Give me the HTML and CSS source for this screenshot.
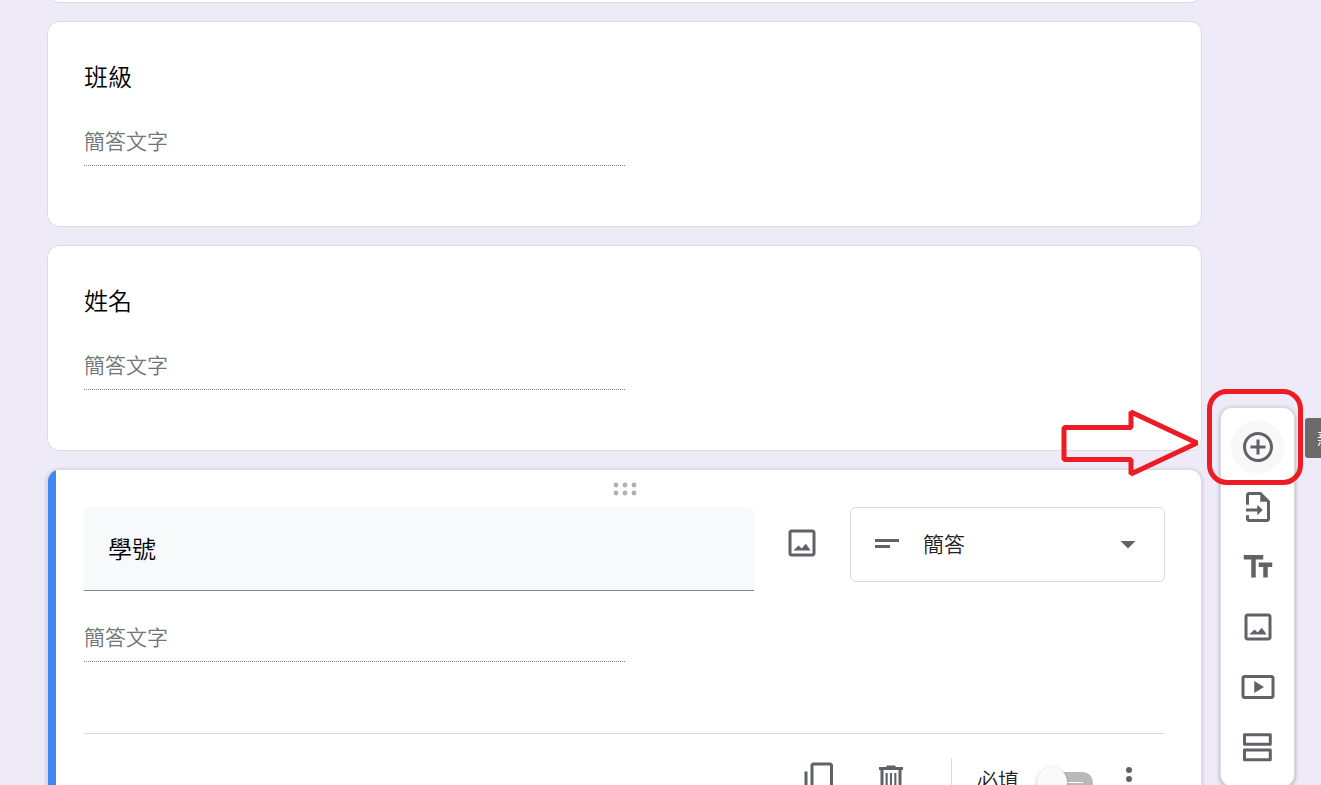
FILE: index.html
```html
<!DOCTYPE html>
<html lang="zh-Hant">
<head>
    <meta charset="UTF-8">
    <meta name="viewport" content="width=device-width, initial-scale=1.0">
    <title>表單編輯器</title>
    <link rel="stylesheet" href="styles.css">
</head>
<body>
    <div class="editor">
        <main class="questions">
            <section class="card"></section>

            <section class="card">
                <label class="question-title" for="answer-class">班級</label>
                <input class="short-answer" type="text" id="answer-class" placeholder="簡答文字" disabled>
            </section>

            <section class="card">
                <label class="question-title" for="answer-name">姓名</label>
                <input class="short-answer" type="text" id="answer-name" placeholder="簡答文字" disabled>
            </section>

            <section class="card card-active">
                <div class="drag-handle">
                    <svg width="24" height="14" viewBox="0 0 24 14">
                        <circle cx="3" cy="3" r="2.4"/><circle cx="12" cy="3" r="2.4"/><circle cx="21" cy="3" r="2.4"/>
                        <circle cx="3" cy="11" r="2.4"/><circle cx="12" cy="11" r="2.4"/><circle cx="21" cy="11" r="2.4"/>
                    </svg>
                </div>
                <div class="question-row">
                    <input class="title-input" type="text" value="學號" aria-label="問題">
                    <button class="icon-button add-image" type="button" aria-label="新增圖片">
                        <svg class="icon" viewBox="0 0 24 24"><path d="M19 5v14H5V5h14m0-2H5c-1.100 0-2 .9-2 2v14c0 1.100.9 2 2 2h14c1.100 0 2-.9 2-2V5c0-1.100-.9-2-2-2z"/><path d="M14.500 12.500l-2.700 3.200-2.100-2L6.200 17h11.600z"/></svg>
                    </button>
                    <div class="type-picker">
                        <svg class="icon type-icon" viewBox="0 0 24 24"><path d="M4 8.600h16v2H4zM4 12.600h10v2H4z"/></svg>
                        <select aria-label="問題類型">
                            <option>簡答</option>
                            <option>段落</option>
                            <option>選擇題</option>
                        </select>
                        <svg class="icon arrow-icon" viewBox="0 0 24 24"><path d="M7 10l5 5 5-5z"/></svg>
                    </div>
                </div>
                <input class="short-answer" type="text" placeholder="簡答文字" aria-label="簡答文字" disabled>

                <div class="card-footer">
                    <button class="icon-button" type="button" aria-label="複製">
                        <svg class="icon" viewBox="0 0 24 24"><path d="M20 1H9c-1.100 0-2 .9-2 2v13c0 1.100.9 2 2 2h11c1.100 0 2-.9 2-2V3c0-1.100-.9-2-2-2zm0 15H9V3h11v13zM3 7h2v14h11v2H5c-1.100 0-2-.9-2-2z"/></svg>
                    </button>
                    <button class="icon-button" type="button" aria-label="刪除">
                        <svg class="icon" viewBox="0 0 24 24"><path d="M15 4V3H9v1H4v2h1v13c0 1.100.9 2 2 2h10c1.100 0 2-.9 2-2V6h1V4h-5zm2 15H7V6h10v13z"/><path d="M8.400 8h1.400v9.500H8.400zM11.300 8h1.400v9.500h-1.400zM14.200 8h1.400v9.500h-1.400z"/></svg>
                    </button>
                    <span class="divider"></span>
                    <label class="required">
                        必填
                        <input type="checkbox">
                    </label>
                    <button class="icon-button" type="button" aria-label="更多選項">
                        <svg class="icon" viewBox="0 0 24 24"><circle cx="12" cy="6" r="2"/><circle cx="12" cy="12" r="2"/><circle cx="12" cy="18" r="2"/></svg>
                    </button>
                </div>
            </section>
        </main>

        <aside class="toolbar">
            <button class="tool tool-hover" type="button" aria-label="新增問題">
                <svg class="icon" viewBox="0 0 24 24"><path d="M13 7h-2v4H7v2h4v4h2v-4h4v-2h-4V7z"/><path d="M12 2C6.480 2 2 6.480 2 12s4.480 10 10 10 10-4.480 10-10S17.520 2 12 2zm0 18c-4.410 0-8-3.590-8-8s3.590-8 8-8 8 3.590 8 8-3.590 8-8 8z"/></svg>
            </button>
            <button class="tool" type="button" aria-label="匯入問題">
                <svg class="icon" viewBox="0 0 24 24"><path d="M14 2H6c-1.100 0-2 .9-2 2v6.500h2V4h7.500v4.500H18V20H6v-2.500H4V20c0 1.100.9 2 2 2h12c1.100 0 2-.9 2-2V8z"/><path d="M11.500 10.500V13H4v2h7.500v2.500L15.200 14z"/></svg>
            </button>
            <button class="tool" type="button" aria-label="新增標題與說明">
                <svg class="icon" viewBox="0 0 24 24"><path d="M2.500 4v3h5v12h3V7h5V4h-13zm19 5h-9v3h3v7h3v-7h3V9z"/></svg>
            </button>
            <button class="tool" type="button" aria-label="新增圖片">
                <svg class="icon" viewBox="0 0 24 24"><path d="M19 5v14H5V5h14m0-2H5c-1.100 0-2 .9-2 2v14c0 1.100.9 2 2 2h14c1.100 0 2-.9 2-2V5c0-1.100-.9-2-2-2z"/><path d="M14.500 12.500l-2.700 3.200-2.100-2L6.200 17h11.600z"/></svg>
            </button>
            <button class="tool" type="button" aria-label="新增影片">
                <svg class="icon" viewBox="0 0 24 24"><path d="M21 4H3c-1.100 0-2 .9-2 2v12c0 1.100.9 2 2 2h18c1.100 0 2-.9 2-2V6c0-1.100-.9-2-2-2zm0 14H3V6h18v12z"/><path d="M9.500 8v8l6.500-4z"/></svg>
            </button>
            <button class="tool" type="button" aria-label="新增區段">
                <svg class="icon" viewBox="0 0 24 24"><path d="M20.200 13H3c-.6 0-1 .4-1 1v6.500c0 .6.4 1 1 1h17.200c.6 0 1-.4 1-1V14c0-.6-.4-1-1-1zm-1 6.500H4V15h15.200zM20.200 2.800H3c-.6 0-1 .4-1 1v6.400c0 .6.4 1 1 1h17.200c.6 0 1-.4 1-1V3.800c0-.6-.4-1-1-1zm-1 6.400H4V4.800h15.200z"/></svg>
            </button>

            <span class="tooltip">新增問題</span>
            <span class="highlight-box"></span>
            <svg class="highlight-arrow" width="140" height="72" viewBox="0 0 140 72"><path d="M3 20.500H70V5L136 36L70 67V52.500H3z"/></svg>
        </aside>
    </div>
</body>
</html>
```

FILE: styles.css
```css
* {
    box-sizing: border-box;
}

body {
    font-family: "Noto Sans CJK TC", sans-serif;
    font-weight: 350;
    background: #eeeaf8;
    color: #000;
    margin: 0;
    height: 100vh;
    overflow: hidden;
}

input,
select,
button {
    font-family: inherit;
    font-weight: inherit;
    margin: 0;
}

.editor {
    display: flex;
    align-items: flex-start;
    gap: 18px;
    padding: 0 26px 0 47px;
}

/* scrolled past the top of the form */
.questions {
    flex: 1;
    display: flex;
    flex-direction: column;
    gap: 18px;
    margin-top: -203px;
}

.card {
    position: relative;
    min-height: 206px;
    padding: 38px 36px 60px;
    background: #fff;
    border: 1px solid #dadce0;
    border-radius: 12px;
}

.question-title {
    display: block;
    margin-bottom: 26px;
    font-size: 24px;
    line-height: 32px;
}

.short-answer {
    display: block;
    width: 50%;
    height: 48px;
    padding: 0 0 3px;
    font-size: 21px;
    background: none;
    border: none;
    border-bottom: 1px dotted #80868b;
}

.short-answer::placeholder {
    color: #70757a;
    opacity: 1;
}

.card-active {
    padding-top: 0;
    padding-bottom: 0;
    overflow: hidden;
    box-shadow: 0 1px 4px rgba(0, 0, 0, 0.2);
}

.card-active::before {
    content: "";
    position: absolute;
    top: 0;
    bottom: 0;
    left: 0;
    width: 8px;
    background: #4285f4;
}

.drag-handle {
    display: flex;
    align-items: center;
    justify-content: center;
    height: 37px;
    fill: #b0b0b0;
}

.question-row {
    display: flex;
    align-items: flex-start;
    margin-bottom: 23px;
}

.title-input {
    flex: 1;
    min-width: 0;
    height: 84px;
    padding: 0 24px 3px;
    font-size: 24px;
    color: #000;
    background: #f8f9fa;
    border: none;
    border-bottom: 1px solid #80868b;
    border-radius: 6px 6px 0 0;
    outline: none;
}

.icon {
    display: block;
    width: 36px;
    height: 36px;
    fill: #5f6368;
}

.icon-button {
    padding: 0;
    background: none;
    border: none;
    cursor: pointer;
}

.add-image {
    margin: 18px 30px;
}

.type-picker {
    position: relative;
    width: 315px;
    height: 75px;
}

.type-picker select {
    width: 100%;
    height: 100%;
    padding: 0 72px 3px;
    font-size: 21px;
    color: #202124;
    background: #fff;
    border: 1px solid #dadce0;
    border-radius: 6px;
    appearance: none;
}

.type-icon,
.arrow-icon {
    position: absolute;
    top: 19px;
    pointer-events: none;
}

.type-icon {
    left: 19px;
}

.arrow-icon {
    right: 19px;
}

.card-footer {
    display: flex;
    align-items: center;
    justify-content: flex-end;
    height: 91px;
    margin-top: 71px;
    padding-right: 18px;
    border-top: 1px solid #dadce0;
}

.card-footer .icon-button + .icon-button {
    margin-left: 37px;
}

.divider {
    width: 1px;
    height: 42px;
    margin: 0 25px 0 42px;
    background: #dadce0;
}

.required {
    display: flex;
    align-items: center;
    gap: 18px;
    margin-right: 18px;
    font-size: 21px;
    color: #202124;
}

.required input {
    position: relative;
    width: 56px;
    height: 21px;
    margin-top: 7px;
    background: linear-gradient(#fff, #fff) 30px 10px / 16px 1px no-repeat #b9b9b9;
    border-radius: 11px;
    appearance: none;
}

.required input::before {
    content: "";
    position: absolute;
    top: -5px;
    left: 0;
    width: 30px;
    height: 30px;
    background: #fafafa;
    border-radius: 50%;
    box-shadow: 0 1px 3px rgba(0, 0, 0, 0.3);
}

.toolbar {
    position: relative;
    width: 75px;
    margin-top: 407px;
    padding: 9px 0;
    background: #fff;
    border: 1px solid #dadce0;
    border-radius: 12px;
    box-shadow: 0 1px 4px rgba(0, 0, 0, 0.3);
}

.tool {
    display: flex;
    align-items: center;
    justify-content: center;
    width: 100%;
    height: 60px;
    padding: 0;
    background: none;
    border: none;
    cursor: pointer;
}

.tool-hover {
    background: radial-gradient(circle, #f8f8f8 26px, transparent 27px);
}

.tooltip {
    position: absolute;
    top: 10px;
    left: 84px;
    padding: 0 12px;
    font-size: 18px;
    line-height: 40px;
    white-space: nowrap;
    color: #fff;
    background: #6b6b6b;
    border-radius: 3px;
}

.highlight-box {
    position: absolute;
    top: -19px;
    left: -14px;
    width: 96px;
    height: 96px;
    border: 5px solid #ed1c24;
    border-radius: 20px;
    pointer-events: none;
}

.highlight-arrow {
    position: absolute;
    top: -1px;
    right: 93px;
    fill: none;
    stroke: #ed1c24;
    stroke-width: 5;
    stroke-linejoin: bevel;
    pointer-events: none;
}
```
